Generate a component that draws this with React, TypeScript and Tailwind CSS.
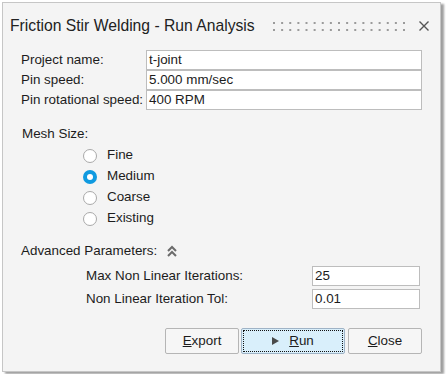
import React from "react";

const font = { fontFamily: '"Liberation Sans", Arial, sans-serif' };

function Grip() {
  const dots: React.ReactElement[] = [];
  for (let i = 0; i < 17; i++) {
    for (let r = 0; r < 2; r++) {
      dots.push(
        <rect key={`${i}-${r}`} x={i * 8.125} y={r * 7} width={2} height={2} fill="#9b9b9b" />
      );
    }
  }
  return (
    <svg width="133" height="9" viewBox="0 0 133 9" className="block">
      {dots}
    </svg>
  );
}

function Radio({ label, checked }: { label: string; checked?: boolean }) {
  return (
    <div className="h-[21px] flex items-center pl-[62px]">
      {checked ? (
        <div className="w-[14px] h-[14px] rounded-full bg-[#0f9ae0] flex items-center justify-center">
          <div className="w-[6px] h-[6px] rounded-full bg-white" />
        </div>
      ) : (
        <div className="w-[14px] h-[14px] rounded-full bg-white border-[1.5px] border-[#a9a9a9] box-border" />
      )}
      <span className="ml-[10px]">{label}</span>
    </div>
  );
}

function Field({ label, value }: { label: string; value: string }) {
  return (
    <div className="h-[20px] flex items-center">
      <div className="w-[125px] whitespace-nowrap">{label}</div>
      <div className="w-[276px] h-[20px] border border-[#bdbdbd] bg-white pl-[2px] flex items-center box-border">
        {value}
      </div>
    </div>
  );
}

function AdvField({ label, value }: { label: string; value: string }) {
  return (
    <div className="h-[20px] flex items-center pl-[65px]">
      <div className="w-[226px] whitespace-nowrap">{label}</div>
      <div className="w-[108px] h-[20px] border border-[#bdbdbd] bg-white pl-[2px] flex items-center box-border">
        {value}
      </div>
    </div>
  );
}

export default function App() {
  return (
    <div className="w-[447px] h-[374px] bg-white pl-[2px] pt-[2px] text-[13.4px] text-[#1c1c1c]" style={font}>
      <div className="w-[439px] h-[370px] border border-[#c6c6c6] bg-[#f4f4f4] shadow-[3px_2px_2px_rgba(0,0,0,0.38)] flex flex-col box-border">
        <div className="h-[45px] flex items-center pl-[7px] pr-[11px]">
          <span className="text-[15.7px] text-[#222] flex-1 whitespace-nowrap">Friction Stir Welding - Run Analysis</span>
          <div className="mt-[1px]">
            <Grip />
          </div>
          <svg width="10" height="10" viewBox="0 0 10 10" className="ml-[13px] mt-[1px]">
            <path d="M0.5 0.5 L9.5 9.5 M9.5 0.5 L0.5 9.5" stroke="#555" strokeWidth="1.4" />
          </svg>
        </div>

        <div className="mt-[2px] pl-[18px] flex flex-col">
          <Field label="Project name:" value="t-joint" />
          <Field label="Pin speed:" value="5.000 mm/sec" />
          <Field label="Pin rotational speed:" value="400 RPM" />
        </div>

        <div className="mt-[14px] pl-[19px] flex flex-col">
          <div className="h-[21px] flex items-center">Mesh Size:</div>
        </div>
        <div className="pl-[18px] flex flex-col">
          <Radio label="Fine" />
          <Radio label="Medium" checked />
          <Radio label="Coarse" />
          <Radio label="Existing" />
        </div>

        <div className="mt-[11px] h-[22px] pl-[18px] flex items-center">
          <span>Advanced Parameters:</span>
          <svg width="12" height="13" viewBox="0 0 12 13" className="ml-[9px]">
            <path d="M2 6 L6 2 L10 6 M2 11 L6 7 L10 11" stroke="#6b6b6b" strokeWidth="2" fill="none" />
          </svg>
        </div>

        <div className="mt-[4px] pl-[18px] flex flex-col gap-[3px]">
          <AdvField label="Max Non Linear Iterations:" value="25" />
          <AdvField label="Non Linear Iteration Tol:" value="0.01" />
        </div>

        <div className="mt-[19px] pr-[18px] flex justify-end">
          <div className="w-[74px] h-[26px] border border-[#b5b5b5] bg-[#f6f6f6] rounded-[2px] flex items-center justify-center box-border">
            <span><u>E</u>xport</span>
          </div>
          <div className="ml-[2px] w-[104px] h-[26px] border border-[#9fb3c6] bg-[#d9effb] rounded-[2px] p-[1px] box-border">
            <div className="w-full h-full border border-dotted border-[#111] flex items-center justify-center box-border">
              <svg width="7" height="8" viewBox="0 0 7 8" className="mr-[10px]">
                <path d="M0 0 L7 4 L0 8 Z" fill="#4a4a4a" />
              </svg>
              <span><u>R</u>un</span>
            </div>
          </div>
          <div className="ml-[3px] w-[74px] h-[26px] border border-[#b5b5b5] bg-[#f6f6f6] rounded-[2px] flex items-center justify-center box-border">
            <span><u>C</u>lose</span>
          </div>
        </div>
      </div>
    </div>
  );
}
